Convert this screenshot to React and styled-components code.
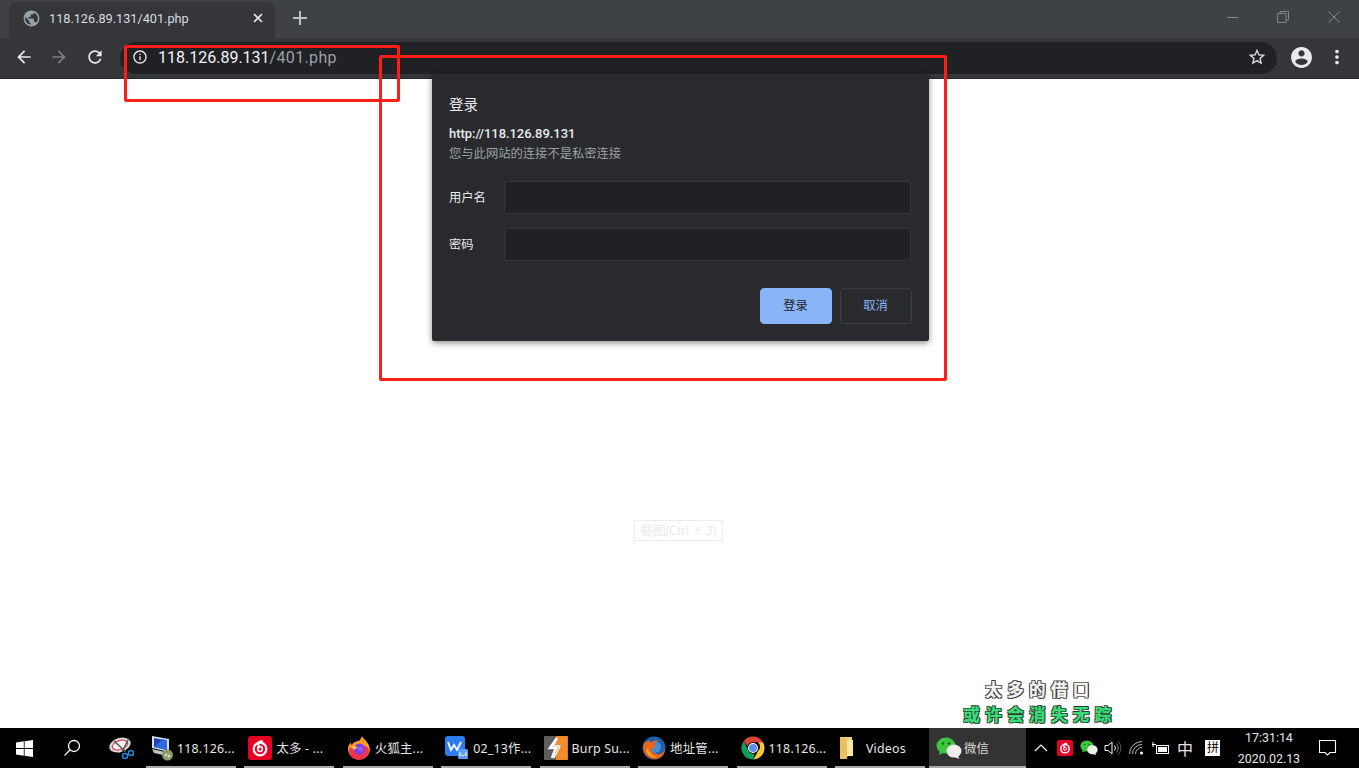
import React from 'react';
import styled, { createGlobalStyle } from 'styled-components';

const Global = createGlobalStyle`
  html, body { margin: 0; padding: 0; height: 100%; overflow: hidden; background: #fff; }
  * { box-sizing: border-box; }
`;

const UI = `Roboto, "Noto Sans", "Noto Sans CJK SC", sans-serif`;
const CJK = `"Noto Sans", "Noto Sans CJK SC", sans-serif`;

const Screen = styled.div`
  position: relative;
  width: 1359px;
  height: 768px;
  display: flex;
  flex-direction: column;
  overflow: hidden;
  font-family: ${UI};
`;

/* ---- browser chrome ---- */
const TabStrip = styled.div`
  height: 38px;
  flex: none;
  background: #3f4245;
  display: flex;
  align-items: flex-end;
  padding-left: 9px;
`;
const Tab = styled.div`
  width: 266px;
  height: 36px;
  background: #35363a;
  border-radius: 8px 8px 0 0;
  display: flex;
  align-items: center;
  padding: 0 11px 4px 13px;
  color: #dadce0;
  font-size: 12.7px;
`;
const TabTitle = styled.span`
  flex: 1;
  margin-left: 8px;
  white-space: nowrap;
`;
const NewTab = styled.div`
  width: 50px;
  height: 36px;
  display: flex;
  align-items: center;
  justify-content: center;
  padding: 0 0 4px 0;
`;
const WindowControls = styled.div`
  margin-left: auto;
  align-self: flex-start;
  display: flex;
`;
const WinButton = styled.div`
  width: 50.5px;
  height: 33px;
  display: flex;
  align-items: center;
  justify-content: center;
`;
const Toolbar = styled.div`
  height: 41px;
  flex: none;
  background: #35363a;
  border-bottom: 1px solid #26272a;
  display: flex;
  align-items: flex-start;
  padding: 3px 0 0 6px;
`;
const NavButton = styled.div`
  width: 35.5px;
  height: 32px;
  display: flex;
  align-items: center;
  justify-content: center;
`;
const Omnibox = styled.div`
  width: 1157px;
  height: 32px;
  margin: 1px 0 0 7.5px;
  border-radius: 16px;
  background: #202124;
  display: flex;
  align-items: center;
  padding: 0 10px 2px 12px;
  font-size: 16px;
`;
const Host = styled.span`
  color: #f1f3f4;
  margin-left: 10px;
`;
const UrlPath = styled.span`
  color: #9aa0a6;
  letter-spacing: 0.35px;
`;
const StarSlot = styled.div`
  margin-left: auto;
  display: flex;
`;
const ToolbarRight = styled.div`
  display: flex;
  margin-left: 6px;
`;
const ToolButton = styled.div`
  width: 36px;
  height: 32px;
  display: flex;
  align-items: center;
  justify-content: center;
`;

/* ---- page ---- */
const Page = styled.main`
  flex: 1;
  position: relative;
  background: #fff;
`;
const Hint = styled.div`
  position: absolute;
  left: 634px;
  top: 441px;
  width: 89px;
  height: 21px;
  border: 1px solid #ececec;
  color: #e2e2e2;
  font: 300 12.6px ${CJK};
  word-spacing: 1.5px;
  padding-bottom: 3px;
  display: flex;
  align-items: center;
  justify-content: center;
  white-space: nowrap;
`;
const Dialog = styled.section`
  position: absolute;
  left: 432px;
  top: 74px;
  width: 497px;
  height: 267px;
  background: #292a2d;
  border-radius: 0 0 2px 2px;
  box-shadow: 0 2px 6px rgba(0, 0, 0, 0.45);
  padding: 20px 18px 0 17px;
  font-family: ${CJK};
  color: #e8eaed;
`;
const DialogTitle = styled.h2`
  margin: 0;
  font-size: 14.5px;
  font-weight: 400;
  line-height: 20px;
`;
const Origin = styled.div`
  margin-top: 11px;
  font: 500 12.9px/18px ${UI};
`;
const Note = styled.div`
  margin-top: 2px;
  font-size: 12.3px;
  line-height: 18px;
  color: #9aa0a6;
`;
const Fields = styled.div`
  margin-top: 18px;
  display: flex;
  flex-direction: column;
  gap: 14px;
`;
const Field = styled.label`
  display: flex;
  align-items: center;
  font-size: 12.3px;
`;
const FieldLabel = styled.span`
  width: 55px;
  flex: none;
  padding-bottom: 2px;
`;
const Input = styled.div`
  width: 407px;
  height: 33px;
  background: #202124;
  border: 1px solid #36373b;
  border-radius: 3px;
`;
const Actions = styled.div`
  margin-top: 27px;
  display: flex;
  justify-content: flex-end;
  gap: 8px;
  margin-right: -1px;
`;
const Button = styled.button`
  width: 72px;
  height: 36px;
  border-radius: 4px;
  font: 12.3px ${CJK};
  border: 1px solid ${p => (p.$primary ? '#8ab4f8' : '#3c4043')};
  background: ${p => (p.$primary ? '#8ab4f8' : 'transparent')};
  color: ${p => (p.$primary ? '#202124' : '#8ab4f8')};
  padding: 0 1px 2px 0;
`;

/* ---- annotations ---- */
const Mark = styled.div`
  position: absolute;
  left: ${p => p.$x}px;
  top: ${p => p.$y}px;
  width: ${p => p.$w}px;
  height: ${p => p.$h}px;
  border: 3px solid #fb1f17;
  border-radius: 2px;
  pointer-events: none;
`;
const Lyrics = styled.div`
  position: absolute;
  left: 932px;
  top: 677px;
  width: 216px;
  text-align: center;
  font: 700 16.5px/25px "Noto Sans CJK SC", sans-serif;
  letter-spacing: 5.4px;
`;
const LyricLine = styled.div`
  color: ${p => p.$color};
  -webkit-text-stroke: 0.3px ${p => p.$color};
  text-shadow: -1px -1px 0 #333, 1px -1px 0 #333, -1px 1px 0 #333, 1px 1px 0 #333, 1px 0 1px #444;
  white-space: nowrap;
`;

/* ---- taskbar ---- */
const Taskbar = styled.footer`
  height: 40px;
  flex: none;
  background: #000;
  display: flex;
  align-items: stretch;
  color: #e6e6e6;
  font: 12.4px ${CJK};
`;
const SystemSlot = styled.div`
  width: ${p => p.$w}px;
  flex: none;
  display: flex;
  align-items: center;
  justify-content: center;
`;
const Tasks = styled.div`
  display: flex;
  gap: 8.43px;
`;
const Task = styled.div`
  position: relative;
  width: 90px;
  display: flex;
  align-items: center;
  padding-left: 4px;
  white-space: nowrap;
  &::after {
    content: '';
    position: absolute;
    left: 0;
    right: 0;
    bottom: 0;
    height: 2px;
    background: #a9a9a9;
  }
`;
const TaskLabel = styled.span`
  margin-left: ${p => p.$gap || 4}px;
  letter-spacing: 0.2px;
`;
const ActiveTask = styled(Task)`
  width: 97px;
  margin-left: 4px;
  background: #333;
  padding-left: 7px;
  color: #ddd;
`;
const Tray = styled.div`
  display: flex;
  align-items: stretch;
  margin-left: 3px;
`;
const TrayCell = styled.div`
  width: ${p => p.$w || 24}px;
  flex: none;
  display: flex;
  align-items: center;
  justify-content: center;
  font-size: ${p => p.$size || 12}px;
`;
const Clock = styled.div`
  width: 70px;
  margin-left: 5px;
  display: flex;
  flex-direction: column;
  align-items: center;
  justify-content: center;
  font: 12.4px/21px ${UI};
  white-space: nowrap;
`;
const ImeBox = styled.span`
  width: 15px;
  height: 16px;
  background: #fff;
  color: #000;
  font-size: 12px;
  line-height: 16px;
  text-align: center;
  display: block;
`;

/* ---- drawings ---- */
const Icon = ({ d, size = 24, fill = '#fff' }) => (
  <svg width={size} height={size} viewBox="0 0 24 24" fill={fill}><path d={d} /></svg>
);
const P = {
  back: 'M20 11H7.83l5.59-5.59L12 4l-8 8 8 8 1.41-1.41L7.83 13H20v-2z',
  forward: 'M12 4l-1.41 1.41L16.17 11H4v2h12.17l-5.58 5.59L12 20l8-8z',
  reload: 'M17.65 6.35C16.2 4.9 14.21 4 12 4c-4.42 0-7.99 3.58-7.99 8s3.57 8 7.99 8c3.73 0 6.84-2.55 7.73-6h-2.08c-.82 2.33-3.04 4-5.65 4-3.31 0-6-2.69-6-6s2.69-6 6-6c1.66 0 3.14.69 4.22 1.78L13 11h7V4l-2.35 2.35z',
  info: 'M11 7h2v2h-2zm0 4h2v6h-2zm1-9C6.48 2 2 6.48 2 12s4.48 10 10 10 10-4.48 10-10S17.52 2 12 2zm0 18c-4.41 0-8-3.59-8-8s3.59-8 8-8 8 3.59 8 8-3.59 8-8 8z',
  star: 'M22 9.24l-7.19-.62L12 2 9.19 8.63 2 9.24l5.46 4.73L5.82 21 12 17.27 18.18 21l-1.63-7.03L22 9.24zM12 15.4l-3.76 2.27 1-4.28-3.32-2.88 4.38-.38L12 6.1l1.71 4.04 4.38.38-3.32 2.88 1 4.28L12 15.4z',
  account: 'M12 2C6.48 2 2 6.48 2 12s4.48 10 10 10 10-4.48 10-10S17.52 2 12 2zm0 3c1.66 0 3 1.34 3 3s-1.34 3-3 3-3-1.34-3-3 1.34-3 3-3zm0 14.2c-2.5 0-4.71-1.28-6-3.22.03-1.99 4-3.08 6-3.08 1.99 0 5.97 1.09 6 3.08-1.29 1.94-3.5 3.22-6 3.22z',
  more: 'M12 8c1.1 0 2-.9 2-2s-.9-2-2-2-2 .9-2 2 .9 2 2 2zm0 2c-1.1 0-2 .9-2 2s.9 2 2 2 2-.9 2-2-.9-2-2-2zm0 6c-1.1 0-2 .9-2 2s.9 2 2 2 2-.9 2-2-.9-2-2-2z',
  globe: 'M12 2C6.48 2 2 6.48 2 12s4.48 10 10 10 10-4.48 10-10S17.52 2 12 2zm-1 17.93c-3.95-.49-7-3.85-7-7.93 0-.62.08-1.21.21-1.79L9 15v1c0 1.1.9 2 2 2v1.93zm6.9-2.54c-.26-.81-1-1.39-1.9-1.39h-1v-3c0-.55-.45-1-1-1H8v-2h2c.55 0 1-.45 1-1V7h2c1.1 0 2-.9 2-2v-.41c2.93 1.19 5 4.06 5 7.41 0 2.08-.8 3.97-2.1 5.39z',
};

const CloseTab = () => (
  <svg width="12" height="12" viewBox="0 0 12 12"><path d="M2 2l8 8M10 2l-8 8" stroke="#e8eaed" strokeWidth="1.7" /></svg>
);
const PlusIcon = () => (
  <svg width="14" height="14" viewBox="0 0 14 14"><path d="M7 0v14M0 7h14" stroke="#bdc1c6" strokeWidth="2" /></svg>
);
const WinMin = () => (
  <svg width="12" height="12" viewBox="0 0 12 12"><path d="M0 6.5h11" stroke="#85888b" /></svg>
);
const WinRestore = () => (
  <svg width="12" height="12" viewBox="0 0 12 12" fill="none" stroke="#85888b"><path d="M.5 2.5h8.5v9H.5zM3 2.5V.5h8.500v8.500H9" /></svg>
);
const WinClose = () => (
  <svg width="12" height="12" viewBox="0 0 12 12"><path d="M.5.500l11 11M11.500.500l-11 11" stroke="#85888b" /></svg>
);

const WinLogo = () => (
  <svg width="17" height="17" viewBox="0 0 17 17" fill="#fff">
    <path d="M0 2.400L7.800 1.300V8H0zM8.600 1.200L17 0v8H8.600zM0 8.900h7.800v6.800L0 14.600zM8.600 8.900H17V17L8.600 15.800z" />
  </svg>
);
const SearchIcon = () => (
  <svg width="18" height="18" viewBox="0 0 18 18" fill="none" stroke="#fff" strokeWidth="1.300">
    <circle cx="11" cy="7" r="5.500" /><path d="M7 11l-5.500 5.500" />
  </svg>
);
const SnipIcon = () => (
  <svg width="26" height="24" viewBox="0 0 26 24">
    <ellipse cx="12" cy="9" rx="11" ry="7" fill="#d9d9d9" transform="rotate(-18 12 9)" />
    <ellipse cx="12" cy="9" rx="8" ry="4.500" fill="#f3f3f3" stroke="#d33" transform="rotate(-18 12 9)" />
    <path d="M6 5l12 11M20 4L14 16" stroke="#555" strokeWidth="1.500" />
    <circle cx="17" cy="20" r="2.500" fill="none" stroke="#2488d8" strokeWidth="1.600" />
    <circle cx="23" cy="17" r="2.500" fill="none" stroke="#2488d8" strokeWidth="1.600" />
  </svg>
);
const RemoteIcon = () => (
  <svg width="24" height="26" viewBox="0 0 24 26">
    <path d="M2 1l17 3v13L2 13z" fill="#d8dde6" />
    <path d="M4 3l13 2.500v9.500L4 12z" fill="#1f3fb8" />
    <path d="M4 12l9-8 4 1.500V15z" fill="#2f6ae0" />
    <path d="M2 14l17 4-1 3-14-3z" fill="#bfc4cc" />
    <circle cx="17.500" cy="20" r="5.500" fill="#8a9c6a" />
    <path d="M15 21l2-2M18 22l2-2" stroke="#fff" strokeWidth="1.200" />
  </svg>
);
const NeteaseIcon = ({ size = 24 }) => (
  <svg width={size} height={size} viewBox="0 0 24 24">
    <rect width="24" height="24" rx="3" fill="#e60026" />
    <circle cx="12" cy="13" r="6.300" fill="none" stroke="#fff" strokeWidth="2.200" />
    <circle cx="12" cy="13" r="2.400" fill="none" stroke="#fff" strokeWidth="1.500" />
    <path d="M10.500 13V7.500c0-2 2.500-3 4.500-2" fill="none" stroke="#fff" strokeWidth="1.800" />
  </svg>
);
const FirefoxNew = () => (
  <svg width="24" height="26" viewBox="0 0 24 26">
    <path d="M15 1c1 3 7 6 8 13a11 11 0 1 1-22-1c.5-3 2-5 3-5 0 1 .5 2 1 2 1-3 5-4 7-4 1-1 2-3 3-5z" fill="#ff9a24" />
    <path d="M2 15a10 10 0 0 0 20 0c0-3-4-5-10-4-5 0-10 1-10 4z" fill="#f3324f" />
    <circle cx="12.500" cy="14" r="5.500" fill="#7542e5" />
    <circle cx="13.500" cy="14" r="2.500" fill="#9b59f0" />
    <path d="M4 12c3-2 5-1 7 1-2 0-3 1-4 2z" fill="#ffbd4f" />
  </svg>
);
const WpsIcon = () => (
  <svg width="24" height="24" viewBox="0 0 24 24">
    <rect x="0" y="0" width="20" height="20" rx="3" fill="#2f7bf0" />
    <path d="M3 6l3 8 3-5 3 5 4-8" fill="none" stroke="#fff" strokeWidth="1.800" />
    <rect x="13" y="13" width="10" height="10" rx="1.500" fill="#5a9df8" />
    <path d="M15 16v4l1.500-1.500L18 20l1.500-1.500L21 20v-4" fill="none" stroke="#fff" strokeWidth="1" />
  </svg>
);
const BurpIcon = () => (
  <svg width="24" height="24" viewBox="0 0 24 24">
    <rect width="12" height="24" fill="#5d5d5d" />
    <rect x="12" width="12" height="24" fill="#f58a2b" />
    <path d="M13 2L6 12h6l-4 10" fill="none" stroke="#fff" strokeWidth="2.600" />
    <path d="M13 2l-3 8h6l-6 12" fill="none" stroke="#fff" strokeWidth="1.500" />
  </svg>
);
const FirefoxOld = () => (
  <svg width="24" height="24" viewBox="0 0 24 24">
    <circle cx="12" cy="12" r="11.500" fill="#1f5ea8" />
    <circle cx="13" cy="11" r="6" fill="#3f8ed8" />
    <path d="M2 7c-2 6 0 14 9 16 7 1 12-4 12-10-1 3-4 6-8 5-4-.5-6-3-5-6 1 0 3 0 4-1 0-1-2-2-2-3 1-2 3-3 4-4-3 0-6 1-7 3-1-1-1-2-1-3-2 1-4 2-6 3z" fill="#e8651a" />
    <path d="M4 14c1 5 6 8 11 7-5-1-8-4-9-8z" fill="#f9b233" />
  </svg>
);
const ChromeIcon = () => (
  <svg width="24" height="24" viewBox="0 0 24 24">
    <path d="M12 0.500a11.500 11.500 0 0 1 10 5.750H12a5.750 5.750 0 0 0-5.500 4L2.800 5A11.500 11.500 0 0 1 12 .500z" fill="#db4437" />
    <path d="M22 6.250A11.500 11.500 0 0 1 12.500 23.500l4.500-8.500a5.750 5.750 0 0 0 0-8.750z" fill="#fcc934" />
    <path d="M12.500 23.500A11.500 11.500 0 0 1 2.800 5l4.500 9.500A5.750 5.750 0 0 0 13.500 17.600z" fill="#0f9d58" />
    <circle cx="12" cy="12" r="5" fill="#fff" />
    <circle cx="12" cy="12" r="4" fill="#5c8df0" />
  </svg>
);
const FolderIcon = () => (
  <svg width="16" height="22" viewBox="0 0 16 22">
    <path d="M1 0h12v18l-12 4z" fill="#f3d27a" />
    <path d="M1 0l7 2v20H2a1 1 0 0 1-1-1z" fill="#e8c060" />
    <path d="M8 3h6v16H8z" fill="#fbe6a2" />
  </svg>
);
const WechatIcon = ({ width = 26 }) => (
  <svg width={width} height={width * 0.85} viewBox="0 0 26 22">
    <ellipse cx="10" cy="8.500" rx="9.500" ry="8" fill="#3fc63f" />
    <path d="M4 14l-1 4 5-2.500z" fill="#3fc63f" />
    <ellipse cx="18" cy="14" rx="7.500" ry="6.500" fill="#eee" />
    <path d="M22 19l1.500 3-5-2z" fill="#eee" />
    <circle cx="7" cy="6.500" r="1.200" fill="#155d15" />
    <circle cx="13" cy="6.500" r="1.200" fill="#155d15" />
  </svg>
);
const Chevron = () => (
  <svg width="14" height="8" viewBox="0 0 14 8"><path d="M1 7l6-6 6 6" fill="none" stroke="#fff" strokeWidth="1.200" /></svg>
);
const SpeakerIcon = () => (
  <svg width="18" height="16" viewBox="0 0 18 16" fill="none" stroke="#fff">
    <path d="M1 5.500h3L8 2v12L4 10.500H1z" />
    <path d="M10.500 5.500a4 4 0 0 1 0 5" />
    <path d="M12.500 3.500a7 7 0 0 1 0 9" stroke="#888" />
    <path d="M14.500 1.500a10 10 0 0 1 0 13" stroke="#555" />
  </svg>
);
const WifiIcon = () => (
  <svg width="16" height="14" viewBox="0 0 16 14" fill="none" stroke="#bbb">
    <path d="M.5 13A12.500 12.500 0 0 1 13 .5" />
    <path d="M3.500 13A9.500 9.500 0 0 1 13 3.500" />
    <path d="M6.500 13A6.500 6.500 0 0 1 13 6.500" />
    <circle cx="12.500" cy="12" r="1.500" fill="#fff" stroke="none" />
  </svg>
);
const BatteryIcon = () => (
  <svg width="18" height="14" viewBox="0 0 18 14" fill="none" stroke="#fff">
    <rect x="4.500" y="4.500" width="12" height="8" />
    <rect x="6" y="6" width="9" height="5" fill="#fff" stroke="none" />
    <path d="M0 3.500h4M1 1v5" />
  </svg>
);
const ActionCenter = () => (
  <svg width="18" height="16" viewBox="0 0 18 16" fill="none" stroke="#fff" strokeWidth="1.100">
    <path d="M.5.500h16v12H11l-2.500 2.500L6 12.500H.5z" />
  </svg>
);

const tasks = [
  { icon: <RemoteIcon />, label: '118.126...', gap: 3 },
  { icon: <NeteaseIcon />, label: '太多 - ...', gap: 4 },
  { icon: <FirefoxNew />, label: '火狐主...', gap: 4 },
  { icon: <WpsIcon />, label: '02_13作...', gap: 4 },
  { icon: <BurpIcon />, label: 'Burp Su...', gap: 4 },
  { icon: <FirefoxOld />, label: '地址管...', gap: 4 },
  { icon: <ChromeIcon />, label: '118.126...', gap: 4 },
  { icon: <FolderIcon />, label: 'Videos', gap: 11 },
];

function App() {
  return (
    <Screen>
      <Global />
      <TabStrip>
        <Tab>
          <Icon d={P.globe} size={19} fill="#9aa0a6" />
          <TabTitle>118.126.89.131/401.php</TabTitle>
          <CloseTab />
        </Tab>
        <NewTab><PlusIcon /></NewTab>
        <WindowControls>
          <WinButton><WinMin /></WinButton>
          <WinButton><WinRestore /></WinButton>
          <WinButton><WinClose /></WinButton>
        </WindowControls>
      </TabStrip>

      <Toolbar>
        <NavButton><Icon d={P.back} size={20} fill="#e8eaed" /></NavButton>
        <NavButton><Icon d={P.forward} size={20} fill="#7b7d80" /></NavButton>
        <NavButton><Icon d={P.reload} size={20} fill="#e8eaed" /></NavButton>
        <Omnibox>
          <Icon d={P.info} size={16} fill="#e8eaed" />
          <Host>118.126.89.131</Host>
          <UrlPath>/401.php</UrlPath>
          <StarSlot><Icon d={P.star} size={20} fill="#dadce0" /></StarSlot>
        </Omnibox>
        <ToolbarRight>
          <ToolButton><Icon d={P.account} size={25} fill="#e8eaed" /></ToolButton>
          <ToolButton><Icon d={P.more} size={22} fill="#e8eaed" /></ToolButton>
        </ToolbarRight>
      </Toolbar>

      <Page>
        <Hint>截图(Ctrl + 3)</Hint>
      </Page>

      <Dialog>
        <DialogTitle>登录</DialogTitle>
        <Origin>http://118.126.89.131</Origin>
        <Note>您与此网站的连接不是私密连接</Note>
        <Fields>
          <Field><FieldLabel>用户名</FieldLabel><Input /></Field>
          <Field><FieldLabel>密码</FieldLabel><Input /></Field>
        </Fields>
        <Actions>
          <Button $primary>登录</Button>
          <Button>取消</Button>
        </Actions>
      </Dialog>

      <Mark $x={124} $y={45} $w={276} $h={57} />
      <Mark $x={379} $y={55} $w={568} $h={326} />

      <Lyrics>
        <LyricLine $color="#f4f4f4">太多的借口</LyricLine>
        <LyricLine $color="#37e07a">或许会消失无踪</LyricLine>
      </Lyrics>

      <Taskbar>
        <SystemSlot $w={49}><WinLogo /></SystemSlot>
        <SystemSlot $w={46}><SearchIcon /></SystemSlot>
        <SystemSlot $w={51}><SnipIcon /></SystemSlot>
        <Tasks>
          {tasks.map((t, i) => (
            <Task key={i}>
              {t.icon}
              <TaskLabel $gap={t.gap}>{t.label}</TaskLabel>
            </Task>
          ))}
        </Tasks>
        <ActiveTask>
          <WechatIcon />
          <TaskLabel $gap={2}>微信</TaskLabel>
        </ActiveTask>
        <Tray>
          <TrayCell><Chevron /></TrayCell>
          <TrayCell><NeteaseIcon size={16} /></TrayCell>
          <TrayCell><WechatIcon width={18} /></TrayCell>
          <TrayCell><SpeakerIcon /></TrayCell>
          <TrayCell><WifiIcon /></TrayCell>
          <TrayCell><BatteryIcon /></TrayCell>
          <TrayCell $size={16}>中</TrayCell>
          <TrayCell $w={32}><ImeBox>拼</ImeBox></TrayCell>
          <Clock>
            <span>17:31:14</span>
            <span>2020.02.13</span>
          </Clock>
          <TrayCell $w={48}><ActionCenter /></TrayCell>
        </Tray>
      </Taskbar>
    </Screen>
  );
}

export default App;
